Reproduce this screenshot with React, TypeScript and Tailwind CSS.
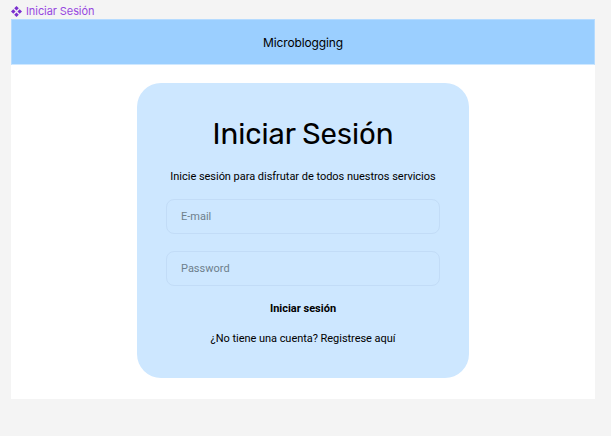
const field =
  'flex items-center rounded-[8px] border border-[#c2dcf7] px-[14px] pt-[2px] text-[11px] text-[#6d7f8c] font-[Roboto,sans-serif]';

function ComponentMark() {
  return (
    <svg className="size-[11px]" viewBox="0 0 11 11" fill="#7a2fcf">
      <path d="M5.5 0 7.8 2.3 5.5 4.6 3.2 2.3ZM5.5 6.4 7.8 8.7 5.5 11 3.2 8.7ZM2.3 3.2 4.6 5.5 2.3 7.8 0 5.5ZM8.7 3.2 11 5.5 8.7 7.8 6.4 5.5Z" />
    </svg>
  );
}

export default function App() {
  return (
    <div className="h-[436px] w-[611px] overflow-hidden bg-[#f4f4f4] pl-[11px] font-[Roboto,sans-serif] text-black">
      <div className="flex h-[19px] items-center gap-[4px] pt-[3px] font-[Inter,sans-serif] text-[11px] tracking-[-0.08px] text-[#9747e0]">
        <ComponentMark />
        <span>Iniciar Sesión</span>
      </div>
      <main className="flex h-[380px] w-[584px] flex-col items-center bg-white">
        <header className="flex h-[46px] w-full items-center justify-center border border-b-[#cfe8ff] border-x-[#b5dbff] border-t-[#b5dbff] bg-[#9bcfff] pt-[2px] font-[Inter,sans-serif] text-[12px] tracking-[-0.12px]">
          Microblogging
        </header>
        <section className="mt-[18px] flex h-[295px] w-[332px] flex-col items-stretch rounded-[24px] bg-[#cde7ff] px-[29px] text-center">
          <h1 className="mt-[32px] text-[29.3px] leading-[38px] font-[Rubik,Roboto,sans-serif]">Iniciar Sesión</h1>
          <p className="mt-[16px] text-[11px] leading-[16px] tracking-[-0.03px] whitespace-nowrap">Inicie sesión para disfrutar de todos nuestros servicios</p>
          <div className={field + ' mt-[14px] h-[35px]'}>E-mail</div>
          <div className={field + ' mt-[17px] h-[35px]'}>Password</div>
          <p className="mt-[15px] text-[11px] leading-[16px] font-bold">Iniciar sesión</p>
          <p className="mt-[14px] text-[11px] leading-[16px] tracking-[-0.04px]">¿No tiene una cuenta? Registrese aquí</p>
        </section>
      </main>
    </div>
  );
}
